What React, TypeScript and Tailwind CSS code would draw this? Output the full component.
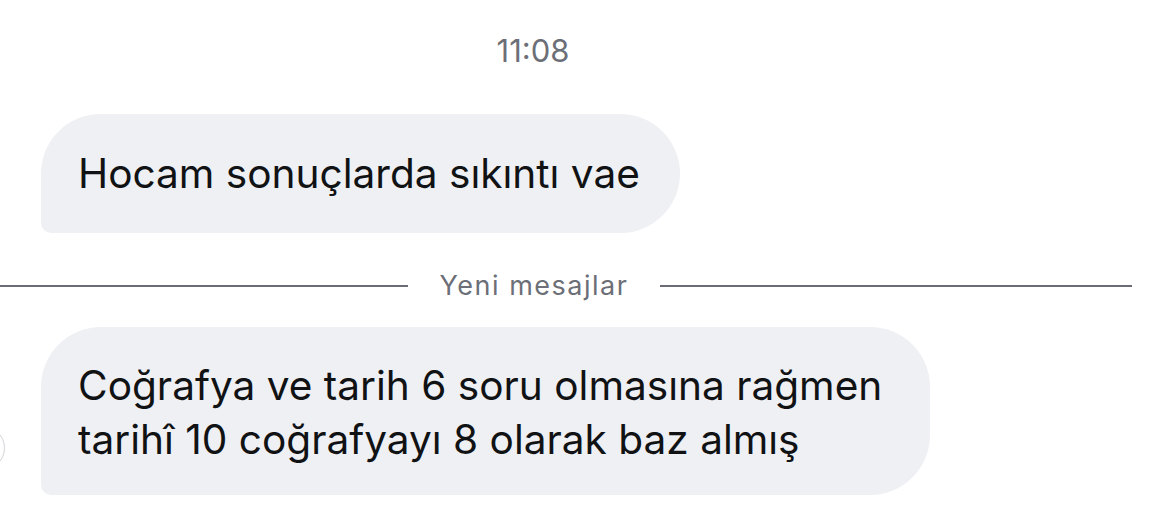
import React from 'react';

const font = "font-['Inter','Noto_Sans',sans-serif]";

const App: React.FC = () => {
  return (
    <div className={`min-h-screen w-[1151px] bg-white overflow-hidden pt-[33px] ${font}`}>
      <div className="flex justify-center pr-[85px]">
        <span className="text-[31px] leading-[36px] text-[#6c6f77]">11:08</span>
      </div>

      <div className="mt-[45px] pl-[41px] flex">
        <div className="h-[119px] flex items-center pl-[37px] pr-[40px] bg-[#eff0f4] rounded-[60px] rounded-bl-[10px]">
          <p className="text-[40.6px] leading-[54px] text-[#111214] whitespace-nowrap">
            Hocam sonuçlarda sıkıntı vae
          </p>
        </div>
      </div>

      <div className="mt-[37px] h-[32px] flex items-center">
        <div className="w-[408px] h-[2px] bg-[#696c74]" />
        <span className="w-[252px] text-center text-[27px] tracking-[1.5px] leading-[32px] text-[#6c6f77]">Yeni mesajlar</span>
        <div className="w-[472px] h-[2px] bg-[#696c74]" />
      </div>

      <div className="mt-[25px] flex items-end">
        <div className="shrink-0 w-[44px] h-[44px] ml-[-39px] mb-[25px] rounded-full border-[1.5px] border-[#d4d5da]" />
        <div className="ml-[36px] pt-[32px] pb-[28px] pl-[37px] pr-[48px] bg-[#eff0f4] rounded-[60px] rounded-bl-[10px]">
          <p className="text-[40.6px] leading-[54px] text-[#111214] whitespace-nowrap">
            Coğrafya ve tarih 6 soru olmasına rağmen
            <br />
            tarihî 10 coğrafyayı 8 olarak baz almış
          </p>
        </div>
      </div>
    </div>
  );
};

export default App;
